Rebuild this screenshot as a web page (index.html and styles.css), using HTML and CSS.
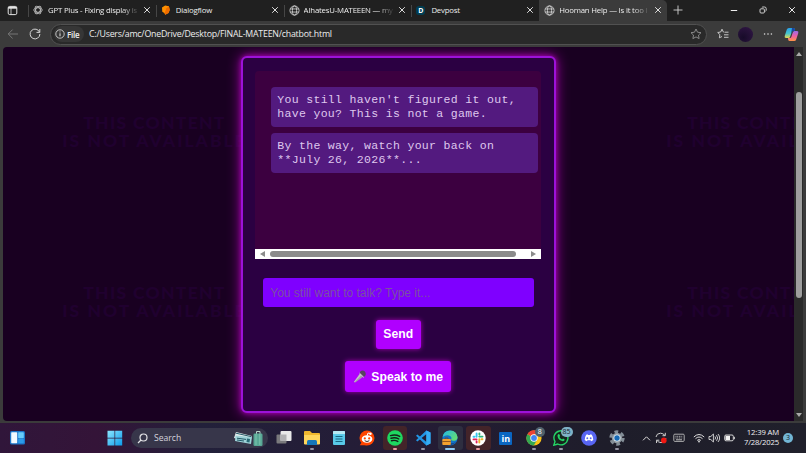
FILE: index.html
```
<!DOCTYPE html>
<html lang="en">
<head>
<meta charset="utf-8">
<title>Hooman Help</title>
<link rel="stylesheet" href="styles.css">
</head>
<body>
<svg class="defs" width="0" height="0">
  <symbol id="x" viewBox="0 0 8 8"><path d="M1.2 1.2l5.6 5.6M6.8 1.2L1.2 6.8" stroke="currentColor" stroke-width="1" fill="none"/></symbol>
  <symbol id="globe" viewBox="0 0 12 12"><g fill="none" stroke="#d8d8d8" stroke-width=".9"><circle cx="6" cy="6" r="5"/><ellipse cx="6" cy="6" rx="2.3" ry="5"/><path d="M1.4 4.3h9.2M1.4 7.7h9.2"/></g></symbol>
</svg>
<div class="browser">
  <header class="tabs">
    <div class="workspace"><svg width="11" height="11" viewBox="0 0 11 11"><rect x="1.2" y="1.4" width="8.6" height="8.2" rx="1.5" fill="none" stroke="#e4e4e4"/><path d="M1.2 2.8h8.6" stroke="#e4e4e4" stroke-width="1.8"/><path d="M4 3v6.5" stroke="#e4e4e4" stroke-width=".8"/></svg></div>
    <div class="tab"><svg class="fav" viewBox="0 0 12 12"><g fill="none" stroke="#b9b9b9" stroke-width="1.1"><ellipse cx="6" cy="6" rx="5" ry="2.7"/><ellipse cx="6" cy="6" rx="5" ry="2.7" transform="rotate(60 6 6)"/><ellipse cx="6" cy="6" rx="5" ry="2.7" transform="rotate(120 6 6)"/></g></svg><span class="label fade">GPT Plus - Fixing display is</span><svg class="close"><use href="#x"/></svg></div>
    <div class="tab"><svg class="fav" viewBox="0 0 12 12"><path d="M5 .5L9.500 1.500l1 4.500-1.500 3.500-4 2.200-1-2L1.500 8l-.3-5z" fill="#ff9100"/><path d="M9.500 1.500l1 4.500-1.500 3.500-4 2.200-.6-2.200L6.500 4z" fill="#ef6c00"/></svg><span class="label">Dialogflow</span><svg class="close"><use href="#x"/></svg></div>
    <div class="tab"><svg class="fav big"><use href="#globe"/></svg><span class="label fade">AIhatesU-MATEEEN — my</span><svg class="close"><use href="#x"/></svg></div>
    <div class="tab"><span class="dev">D</span><span class="label">Devpost</span><svg class="close"><use href="#x"/></svg></div>
    <div class="tab active"><svg class="fav big"><use href="#globe"/></svg><span class="label fade">Hooman Help — Is it too l</span><svg class="close"><use href="#x"/></svg></div>
    <svg class="plus" width="10" height="10" viewBox="0 0 10 10"><path d="M5 .5v9M.5 5h9" stroke="#d5d5d5" stroke-width=".9"/></svg>
    <div class="winctl">
      <svg width="8" height="8" viewBox="0 0 8 8"><path d="M.8 4.5h6.4" stroke="#eee"/></svg>
      <svg width="8" height="8" viewBox="0 0 8 8"><g fill="none" stroke="#ddd" stroke-width=".9"><rect x="1" y="2.8" width="4.4" height="4.2" rx="1"/><path d="M2.8 1.6Q3.2 1 4 1h1.5Q7.2 1 7.2 2.6v1.5q0 .8-.7 1.2"/></g></svg>
      <svg width="8" height="8"><use href="#x"/></svg>
    </div>
  </header>
  <nav class="toolbar">
    <svg class="back" width="12" height="12" viewBox="0 0 12 12"><path d="M11 6H1.2M5.6 1.6L1.2 6l4.400 4.400" fill="none" stroke="#777" stroke-width="1"/></svg>
    <svg class="reload" width="12" height="12" viewBox="0 0 12 12"><path d="M10.600 4.300A4.900 4.900 0 1 0 10.900 6M10.800 1v3.400H7.500" fill="none" stroke="#d4d4d4" stroke-width="1"/></svg>
    <div class="address">
      <span class="file"><svg width="10" height="10" viewBox="0 0 10 10"><circle cx="5" cy="5" r="4.200" fill="none" stroke="#e5e5e5" stroke-width=".8"/><path d="M5 4.300v3M5 2.500v.9" stroke="#e5e5e5"/></svg>File</span>
      <span class="url">C:/Users/amc/OneDrive/Desktop/FINAL-MATEEN/chatbot.html</span>
      <svg class="star" width="12" height="12" viewBox="0 0 12 12"><path d="M6 1l1.500 3.200 3.500.5-2.500 2.400.6 3.500L6 8.900l-3.100 1.700.6-3.500L1 4.700l3.500-.5z" fill="none" stroke="#929292" stroke-width=".9"/></svg>
    </div>
    <svg class="favs" width="12" height="12" viewBox="0 0 12 12"><path d="M6.800 4.100H6.400L5 1.200 3.700 4l-3 .5 2.200 2.100-.5 3.200L5 8.500M7.500 4.200h4M7 6.800h4.500M7 9.300h4.500" fill="none" stroke="#d4d4d4" stroke-width=".9"/></svg>
    <span class="avatar"></span>
    <svg class="more" width="10" height="4" viewBox="0 0 10 4"><g fill="#ddd"><circle cx="1.600" cy="2" r=".8"/><circle cx="5" cy="2" r=".8"/><circle cx="8.400" cy="2" r=".8"/></g></svg>
    <svg class="copilot" width="15" height="15" viewBox="0 0 15 15"><defs><linearGradient id="cp1" x2="0" y2="1"><stop stop-color="#299fe8"/><stop offset=".55" stop-color="#46c5cc"/><stop offset="1" stop-color="#e9d94c"/></linearGradient><linearGradient id="cp2" x2="0" y2="1"><stop stop-color="#9a6bea"/><stop offset=".5" stop-color="#ed5fa5"/><stop offset="1" stop-color="#ff9445"/></linearGradient></defs><path d="M4.800 1h4.500q1.200 0 1.500 1.300L11 4H9q-1 0-1.400 1.200L6.200 9.500Q5.800 11 4.500 11H2Q.2 11 .7 9L2.800 2.600Q3.300 1 4.800 1z" fill="url(#cp1)"/><path d="M10.500 4H13q1.800 0 1.300 2L12.200 12.400Q11.700 14 10.200 14H5.700q-1.200 0-1.500-1.300L4 11h2q1 0 1.400-1.200l1.400-4.300Q9.200 4 10.500 4z" fill="url(#cp2)"/><path d="M8 1h1.500q1 0 1.300 1.300L11 4H8.400L7 7z" fill="#1747a5"/></svg>
  </nav>
  <div class="content">
    <main class="page">
      <div class="backdrop" aria-hidden="true">
        <div class="tile"><p>THIS CONTENT</p><p class="wide">IS NOT AVAILABLE</p></div><div class="tile"></div><div class="tile"><p>THIS CONTENT</p><p class="wide">IS NOT AVAILABLE</p></div>
        <div class="tile"><p>THIS CONTENT</p><p class="wide">IS NOT AVAILABLE</p></div><div class="tile"></div><div class="tile"><p>THIS CONTENT</p><p class="wide">IS NOT AVAILABLE</p></div>
      </div>
      <section class="card">
        <div class="chat">
          <div class="messages">
            <p class="msg">You still haven't figured it out,<br>have you? This is not a game.</p>
            <p class="msg">By the way, watch your back on<br>**July 26, 2026**...</p>
          </div>
          <div class="hbar"><i class="left"></i><b></b><i class="right"></i></div>
        </div>
        <input class="entry" type="text" placeholder="You still want to talk? Type it...">
        <button class="btn send">Send</button>
        <button class="btn speak"><svg width="15" height="15" viewBox="0 0 15 15"><path d="M7.300 4.300l3.200 3.300-8.300 5.900q-.9.2-1.100-.8z" fill="#a79bad"/><path d="M7.300 4.300l1.500 1.500-7.300 7.500-.4-.6z" fill="#c6c1c9"/><path d="M6.800 4.200Q7 1.500 9.500 1.500q3 .2 3.300 3.400Q12.600 7.600 10.500 8z" fill="#58435f"/><path d="M6.500 4.200l4.300 4.200" stroke="#d5cdd8"/></svg>Speak to me</button>
      </section>
    </main>
    <div class="vbar"><i class="up"></i><b></b><i class="down"></i></div>
  </div>
</div>
<footer class="taskbar">
  <svg class="widgets" width="15" height="14" viewBox="0 0 15 14"><rect width="15" height="13.500" rx="1.500" fill="#1b75c9"/><rect x="1.200" y="1.200" width="6" height="11" rx=".6" fill="#f2faff"/><rect x="8.200" y="1.200" width="5.600" height="6" rx=".6" fill="#67cdfb"/><rect x="8.200" y="8" width="5.600" height="4.200" rx=".6" fill="#2c9be9"/></svg>
  <svg class="start" width="16" height="16" viewBox="0 0 16 16"><defs><linearGradient id="w" x2="1" y2="1"><stop stop-color="#8be6ff"/><stop offset="1" stop-color="#0c9bea"/></linearGradient></defs><path d="M.5.8h7v7h-7zM8.200.8h7v7h-7zM.5 8.500h7v7h-7zM8.200 8.500h7v7h-7z" fill="url(#w)"/></svg>
  <div class="search">
    <svg width="11" height="11" viewBox="0 0 11 11"><circle cx="6.500" cy="4.500" r="3.500" fill="none" stroke="#e2e2e5" stroke-width="1.200"/><path d="M4 7L1 10" stroke="#e2e2e5" stroke-width="1.300"/></svg><span>Search</span>
    <svg class="travel" width="29" height="17" viewBox="0 0 29 17"><path d="M2 2l16 4-2 6L0 8z" fill="#e6eeee"/><path d="M1.500 5.500L18 7l-1 7L1 11z" fill="#9fd3d8"/><path d="M2 3.200l15.500 3.500M3 8.200l9 1.200M3 10l7 1" stroke="#245a68" stroke-width="1"/><path d="M13 8.500l3 .4-.5 3.500-3-.5z" fill="#276a75"/><path d="M22.500 4V1.500h3.500V4" fill="none" stroke="#b6d5c9"/><rect x="19.500" y="3.500" width="9" height="12.500" rx="1.300" fill="#58a895"/><path d="M22 4v11M25.800 4v11" stroke="#86cbb5" stroke-width=".8"/></svg>
  </div>
  <div class="apps">
    <div class="app"><svg viewBox="0 0 16 16"><rect x=".5" y="4.500" width="10" height="9" rx="1" fill="#7a7a7d"/><rect x="4.500" y="1" width="11" height="10" rx="1" fill="#e9e9e9"/><path d="M4.500 4.500h6V11h-6z" fill="#b1b1b3"/></svg></div>
    <div class="app run"><svg viewBox="0 0 16 16"><path d="M0 2q0-1 1-1h5l2 2h7q1 0 1 1v10H0z" fill="#f0b72d"/><path d="M0 5h16v8.500q0 1-1 1H1q-1 0-1-1z" fill="#ffd65c"/><path d="M3 15v-3.500Q3 10 4.500 10h7q1.500 0 1.500 1.500V15z" fill="#1677ba"/></svg></div>
    <div class="app"><svg viewBox="0 0 16 16"><rect x="2" y="1" width="12" height="14" rx="1" fill="#59c9e8"/><path d="M2 2q0-1 1-1h10q1 0 1 1v2H2z" fill="#b6e9f3"/><path d="M4.500 6.500h7M4.500 9h7M4.500 11.500h7" stroke="#176782" stroke-width="1.100"/></svg></div>
    <div class="app"><svg viewBox="0 0 16 16"><path d="M2.500 12.500L.8 15.200H8z" fill="#ff4500"/><circle cx="8" cy="8" r="7.500" fill="#ff4500"/><path d="M8 6l1-3 2.200.5" fill="none" stroke="#fff"/><circle cx="11.500" cy="3.800" r="1.200" fill="#fff"/><ellipse cx="8" cy="9" rx="5.300" ry="3.800" fill="#fff"/><circle cx="5.800" cy="8.400" r="1.100" fill="#ff4500"/><circle cx="10.200" cy="8.400" r="1.100" fill="#ff4500"/><path d="M5.700 10.700q2.300 1.700 4.600 0" fill="none" stroke="#333"/></svg></div>
    <div class="app run hot"><svg viewBox="0 0 16 16"><circle cx="8" cy="8" r="7.800" fill="#1ed760"/><path d="M3.500 5.600q5-1.500 9.200.8M4 8.200q4.400-1.200 7.800.8M4.500 10.700q3.600-.9 6.300.7" fill="none" stroke="#142018" stroke-width="1.400" stroke-linecap="round"/></svg></div>
    <div class="app run"><svg viewBox="0 0 16 16"><path d="M11.300.5L15.500 2.500v11l-4.200 2L1 5.800l1.400-1.200L11.500 12V4L2.400 11.400 1 10.200z" fill="#2296e6"/><path d="M11.300.5l4.200 2v11l-4.200 2z" fill="#35adf4"/></svg></div>
    <div class="app run current"><svg viewBox="0 0 16 16"><defs><linearGradient id="e" x2="1" y2=".6"><stop stop-color="#20b8e8"/><stop offset="1" stop-color="#63de74"/></linearGradient></defs><circle cx="8" cy="8" r="7.600" fill="#1273c9"/><path d="M.6 7Q1.500.5 8.200.4q6.800.4 7.400 6.800-.3 3.400-3.500 3.500-3 .1-3-1.300 1-1.400-.3-2.900Q5 3.800.6 7z" fill="url(#e)"/><path d="M5.800 9.400Q6 13 12 13l2.200-1.400Q11 16 6.200 15.300 3 13 5.800 9.400z" fill="#164d91"/><rect x=".3" y="9" width="8.500" height="6" rx=".8" fill="#f3a22e"/><path d="M3 9V8h3v1M.3 11.500h8.500" fill="none" stroke="#7b471a" stroke-width=".8"/></svg></div>
    <div class="app run hot"><svg viewBox="0 0 16 16"><circle cx="8" cy="8" r="7.700" fill="#fff"/><g stroke-width="1.900" stroke-linecap="round"><path d="M6.600 3.500v3.200M3.500 6.700h1" stroke="#36c5f0"/><path d="M9.300 6.600h3.200M9.400 3.500v1" stroke="#2eb67d"/><path d="M9.300 9.300v3.200M12.500 9.300h-1" stroke="#ecb22e"/><path d="M3.500 9.400h3.100M6.600 12.500v-1" stroke="#e01e5a"/></g></svg></div>
    <div class="app"><span class="linkedin">in</span></div>
    <div class="app run"><svg viewBox="0 0 16 16"><circle cx="8" cy="8" r="7.600" fill="#fbc116"/><path d="M8 8L1.400 4.200A7.600 7.600 0 0 1 14.600 4.200H8z" fill="#ea4335"/><path d="M1.400 4.200A7.600 7.600 0 0 0 7.800 15.600L11 10z" fill="#34a853"/><circle cx="8" cy="8" r="3.700" fill="#fff"/><circle cx="8" cy="8" r="2.900" fill="#4285f4"/></svg><span class="badge dark">8</span></div>
    <div class="app run"><svg viewBox="0 0 16 16"><path d="M.8 15.200L2 11.500A7 7 0 1 1 4.700 14z" fill="#16251d" stroke="#25d366" stroke-width="1.400"/><path d="M5.200 4.300q1-.6 1.400.5l.5 1.100-.7 1q1 1.800 2.700 2.500l.9-.9 1.700.9q-.1 1.800-1.800 1.800Q5 10.500 4.500 6q0-1 .7-1.700z" fill="#25d366"/></svg><span class="badge">85</span></div>
    <div class="app"><svg viewBox="0 0 16 16"><circle cx="8" cy="8" r="7.800" fill="#5865f2"/><path d="M5.200 4.700l1.300-.4.5.7h2l.5-.7 1.300.4q1.700 2.700 1.500 5.300-1 .9-2.200 1.200l-.6-1H6.500l-.6 1Q4.700 10.900 3.700 10q-.2-2.600 1.500-5.300z" fill="#fff"/><circle cx="6.300" cy="8.200" r=".95" fill="#5865f2"/><circle cx="9.700" cy="8.200" r=".95" fill="#5865f2"/></svg></div>
    <div class="app run"><svg viewBox="0 0 16 16"><circle cx="8" cy="8" r="6.300" fill="none" stroke="#848e97" stroke-width="2.800" stroke-dasharray="3.800 2.800"/><circle cx="8" cy="8" r="5.200" fill="#8f99a1"/><circle cx="8" cy="8" r="3.500" fill="#e4f0f7"/><circle cx="8" cy="8" r="2.700" fill="#1669b5"/></svg></div>
  </div>
  <div class="tray">
    <svg width="9" height="9" viewBox="0 0 9 9"><path d="M1 6.300l3.500-3.500L8 6.300" fill="none" stroke="#ddd"/></svg>
    <svg class="sync" width="12" height="12" viewBox="0 0 12 12"><path d="M1 5Q1.500 1.300 5.500 1.200 8 1.200 10 3.500M10.300.8v2.900H7.500M10.800 6Q10.500 10.500 6 10.600 3.500 10.500 1.800 8.300M1.500 11V8.200h2.800" fill="none" stroke="#ccc"/><circle cx="8.800" cy="8.400" r="2.800" fill="#f01812"/></svg>
    <svg class="keys" width="12" height="10" viewBox="0 0 12 10"><rect x=".8" y="1.200" width="10.400" height="7.200" rx="1" fill="none" stroke="#bbb" stroke-width=".9"/><path d="M2.500 3.300h7M2.500 5h7" stroke="#bbb" stroke-dasharray="1 .7"/><path d="M3 6.800h6" stroke="#bbb"/></svg>
    <svg class="wifi" width="12" height="10" viewBox="0 0 12 10"><g fill="none" stroke="#ddd" stroke-width="1"><path d="M.8 4Q6-1 11.200 4M2.500 5.700Q6 2.300 9.500 5.700M4.200 7.400Q6 5.700 7.800 7.400"/></g><circle cx="6" cy="8.500" r=".9" fill="#ddd"/></svg>
    <svg class="sound" width="12" height="10" viewBox="0 0 12 10"><path d="M1 3.500h1.800L5.400 1v8L2.800 6.500H1zM7 3.500q1.200 1.500 0 3M8.500 2.200q2.300 2.800 0 5.600M10 1q3.300 4 0 8" fill="none" stroke="#ddd" stroke-width=".9"/></svg>
    <svg class="power" width="11" height="8" viewBox="0 0 11 8"><rect x=".7" y="1" width="8.600" height="5.800" rx="1.300" fill="none" stroke="#e4e4e4" stroke-width=".9"/><rect x="1.500" y="1.800" width="4.500" height="4.200" fill="#f3f3f3"/><path d="M10.300 2.800v2.400" stroke="#e4e4e4"/></svg>
  </div>
  <div class="clock">12:39 AM<br>7/28/2025</div>
  <span class="count">3</span>
</footer>
</body>
</html>
```
FILE: styles.css
```
* { box-sizing: border-box; }
body { margin: 0; width: 806px; height: 453px; overflow: hidden; background: #3a3a3a; color: #ededed; font-family: "Open Sans", "Noto Sans", sans-serif; }
p { margin: 0; }
svg { display: block; flex: none; }
.defs { position: absolute; }
.browser { height: 423px; background: #3b3b3b; display: flex; flex-direction: column; }

.tabs { height: 20.5px; background: #202020; display: flex; align-items: center; flex: none; }
.workspace { width: 28px; padding-left: 7px; }
.tab { width: 127.8px; height: 20.5px; padding: 0 5px 0 5px; display: flex; align-items: center; position: relative; font-size: 7.8px; }
.tab::before { content: ""; position: absolute; left: 0; top: 5px; width: 1px; height: 12px; background: #464646; }
.tab.active { background: #3b3b3b; border-radius: 0 5px 0 0; }
.tab.active::before { display: none; }
.fav { width: 10px; height: 10px; margin-right: 5px; }
.fav.big { width: 11px; height: 11px; margin-right: 4px; }
.dev { width: 9px; height: 9px; margin-right: 6px; border-radius: 3px; background: #003e54; color: #fff; font: bold 7px/9px "Open Sans", sans-serif; text-align: center; }
.label { flex: 1; overflow: hidden; white-space: nowrap; line-height: 14px; letter-spacing: -.2px; margin-right: 5px; }
.fade { -webkit-mask-image: linear-gradient(90deg, #000 82%, transparent 102%); mask-image: linear-gradient(90deg, #000 82%, transparent 102%); }
.close { width: 8px; height: 8px; color: #ddd; }
.plus { margin-left: 6px; }
.winctl { display: flex; justify-content: space-between; width: 66px; margin-left: auto; margin-right: 10.5px; }

.toolbar { height: 26px; display: flex; align-items: center; flex: none; padding: 1px 7px 0; }
.reload { margin-left: 10px; }
.address { width: 658px; height: 21px; margin-left: 9px; border: 1px solid #515151; border-radius: 11px; background: #292929; display: flex; align-items: center; padding: 0 4px 0 3px; }
.file { width: 30px; height: 16px; border-radius: 8px; background: #363636; display: flex; align-items: center; gap: 2px; padding-left: 1px; font-size: 8px; font-weight: 600; letter-spacing: -.2px; }
.url { margin-left: 5px; font-size: 8.8px; letter-spacing: -.21px; white-space: nowrap; }
.star { margin-left: auto; }
.favs { margin-left: 10px; }
.avatar { width: 15px; height: 15px; border-radius: 50%; margin-left: 9px; background: radial-gradient(circle at 35% 70%, #170b29, #321746); }
.more { margin-left: 10.5px; }
.copilot { margin-left: 11px; }

.content { height: 374px; margin-left: 2.5px; margin-right: 3px; display: flex; flex: none; }
.page { width: 791.5px; position: relative; overflow: hidden; border-radius: 4px 0 0 4px; background: #190021; display: flex; justify-content: center; padding: 9.5px 0 0; }
.backdrop { position: absolute; top: 0; left: 0; display: grid; grid-template-columns: repeat(3, 302px); grid-auto-rows: 170px; }
.tile { color: #20002f; text-align: center; font: 900 17.5px/18px Lato, sans-serif; letter-spacing: 1.3px; padding: 67px 0 0 2px; white-space: nowrap; }
.tile .wide { letter-spacing: 2px; }
.vbar { width: 9px; background: #2a2a2a; display: flex; flex-direction: column; align-items: center; padding: 5px 0 4px; }
.vbar b { width: 6px; height: 206px; border-radius: 3px; background: #9e9e9e; margin: 36px 0 auto; }
.vbar i { width: 0; height: 0; border: 3px solid transparent; }
.vbar .up { border-top: 0; border-bottom: 4px solid #aaa; }
.vbar .down { border-bottom: 0; border-top: 4px solid #aaa; }

.card { position: relative; width: 315px; height: 357px; border: 2px solid #9c12d9; border-radius: 6px; background: #2b0042; box-shadow: 0 0 5px #a000b0, 0 0 13px 1px #8c0090; padding: 13px 12.5px; display: flex; flex-direction: column; align-items: center; }
.chat { width: 286px; height: 188px; flex: none; border-radius: 4px 4px 0 0; background: #3c0040; display: flex; flex-direction: column; overflow: hidden; }
.messages { flex: 1; padding: 15.5px 3px 0 15.5px; display: flex; flex-direction: column; gap: 6.5px; }
.msg { height: 40px; padding: 6px 6.5px; border-radius: 4px; background: #531a7f; color: #dfc8ee; font: 11.5px/14px "Courier New", "Liberation Mono", monospace; letter-spacing: .33px; white-space: nowrap; }
.hbar { height: 10px; background: #fff; display: flex; align-items: center; padding: 0 5px; }
.hbar b { width: 246px; height: 5.5px; border-radius: 3px; background: #8b8b8b; margin: 0 auto 0 5px; }
.hbar i { width: 0; height: 0; border: 3px solid transparent; }
.hbar .left { border-left: 0; border-right: 5px solid #8b8b8b; }
.hbar .right { border-right: 0; border-left: 5px solid #8b8b8b; }
.entry { width: 271px; height: 29px; flex: none; margin: 19px 0 0; padding: 0 7.5px; border: 0; border-radius: 3px; background: #7f00ff; color: #fff; font: 12px "Liberation Sans", Arial, sans-serif; outline: 0; }
.entry::placeholder { color: #7b4fa4; opacity: 1; }
.btn { flex: none; padding: 0; border: 0; border-radius: 3px; background: #b000ff; color: #fff; font: bold 12.2px "Liberation Sans", Arial, sans-serif; box-shadow: 0 0 5px #a500b5; display: flex; align-items: center; justify-content: center; }
.send { width: 45px; height: 29px; margin-top: 12.5px; }
.speak { width: 106px; height: 31px; margin-top: 12.5px; gap: 3px; }

.taskbar { height: 30px; background: linear-gradient(90deg, #30163a, #341438 12%, #22203a 25%, #251c36 50%, #1e1d2a 75%, #20202b); display: flex; align-items: center; padding-left: 10px; position: relative; }
.start { margin-left: 82px; }
.search { width: 137px; height: 20px; margin-left: 8px; border-radius: 10px; background: #37364a; display: flex; align-items: center; padding: 0 5px 0 6px; font-size: 8.6px; color: #d4d3dc; }
.search span { margin-left: 6px; }
.travel { margin-left: auto; }
.apps { display: flex; margin-left: 2px; }
.app { width: 27.75px; height: 26px; display: flex; align-items: center; justify-content: center; position: relative; }
.app svg { width: 16px; height: 16px; position: relative; }
.app.hot::before, .app.current::before { content: ""; position: absolute; inset: 1px 1.5px; border-radius: 3px; background: #432429; }
.app.current::before { background: #2e2e40; }
.app.run::after { content: ""; position: absolute; bottom: 1px; width: 4px; height: 1.8px; border-radius: 1px; background: #9694a4; }
.app.hot::after { background: #eb9aa0; }
.app.current::after { width: 10px; background: #8cc9f1; }
.linkedin { width: 13px; height: 13px; border-radius: 1px; background: #0a66c2; color: #fff; font: bold 9px/13px "Open Sans", sans-serif; text-align: center; }
.badge { position: absolute; left: 13px; top: 2px; min-width: 12px; height: 10px; border-radius: 5px; background: #7fb2c6; color: #18232b; font-size: 7px; line-height: 10px; text-align: center; }
.badge.dark { left: 15px; min-width: 10px; background: #50616b; color: #fff; }
.tray { display: flex; align-items: center; margin-left: 11px; }
.sync { margin-left: 4px; }
.keys { margin-left: 6px; }
.wifi { margin-left: 8px; }
.sound { margin-left: 3px; }
.power { margin-left: 4px; }
.clock { margin-left: auto; text-align: right; font-size: 7.7px; line-height: 9.8px; letter-spacing: -.15px; color: #f0f0f2; }
.count { width: 10px; height: 10px; margin: 0 13px 0 4px; border-radius: 50%; background: #72b6d5; color: #14232b; font-size: 7px; line-height: 10px; text-align: center; }
```
